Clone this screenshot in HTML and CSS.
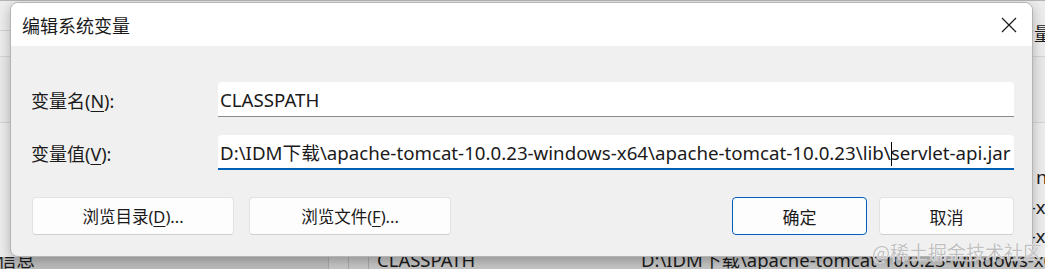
FILE: index.html
```html
<!DOCTYPE html>
<html lang="zh-CN">
<head>
<meta charset="utf-8">
<title>编辑系统变量</title>
<link rel="stylesheet" href="styles.css">
</head>
<body>
<div class="screen">
  <div class="backdrop">
    <div class="bd-head"><span class="bd-head-text">量</span></div>
    <div class="bd-band"></div>
    <div class="bd-list">
      <div class="bd-row"><span class="bd-name"></span><span class="bd-value bd-value-nc">nc</span></div>
      <div class="bd-row"><span class="bd-name"></span><span class="bd-value">D:\IDM下载\apache-tomcat-10.0.23-windows-x64\apache</span></div>
      <div class="bd-row"><span class="bd-name"></span><span class="bd-value">D:\IDM下载\apache-tomcat-10.0.23-windows-x64\apache</span></div>
      <div class="bd-gap"></div>
      <div class="bd-row bd-row-sel">
        <span class="bd-lead">信息</span>
        <span class="bd-sep"></span>
        <span class="bd-sep"></span>
        <span class="bd-name bd-name-sel">CLASSPATH</span>
        <span class="bd-value">D:\IDM下载\apache-tomcat-10.0.23-windows-x64\apache</span>
      </div>
    </div>
  </div>

  <div class="dialog">
    <div class="titlebar">
      <span class="title">编辑系统变量</span>
      <span class="close" aria-label="关闭">
        <svg width="16" height="16" viewBox="0 0 16 16"><path d="M1 1 L15 15 M15 1 L1 15" stroke="#1a1a1a" stroke-width="1.2" fill="none"/></svg>
      </span>
    </div>
    <div class="content">
      <div class="field">
        <label class="label">变量名(<u>N</u>):</label>
        <div class="input"><span class="input-text">CLASSPATH</span></div>
      </div>
      <div class="field">
        <label class="label">变量值(<u>V</u>):</label>
        <div class="input input-focus"><span class="input-text">D:\IDM下载\apache-tomcat-10.0.23-windows-x64\apache-tomcat-10.0.23\lib\<span class="caret"></span>servlet-api.jar</span></div>
      </div>
      <div class="buttons">
        <div class="btn btn-wide">浏览目录(<u>D</u>)...</div>
        <div class="btn btn-wide">浏览文件(<u>F</u>)...</div>
        <div class="spacer"></div>
        <div class="btn btn-small btn-default">确定</div>
        <div class="btn btn-small">取消</div>
      </div>
    </div>
  </div>
  <div class="watermark">@稀土掘金技术社区</div>
</div>
</body>
</html>
```

FILE: styles.css
```css
* { box-sizing: border-box; }
html, body { margin: 0; padding: 0; }
body {
  width: 1045px;
  height: 269px;
  overflow: hidden;
  font-family: "Noto Sans", "Noto Sans CJK SC", sans-serif;
  font-size: 17px;
  color: #1a1a1a;
  background: #eeeeee;
}
.screen {
  position: relative;
  width: 1045px;
  height: 269px;
  overflow: hidden;
}

/* underlying window */
.backdrop {
  display: flex;
  flex-direction: column;
  width: 1045px;
  height: 269px;
  background: #ececec;
}
.bd-head {
  height: 57px;
  flex: none;
  border-top: 1px solid #b4b4b4;
  border-bottom: 1px solid #d4d4d4;
  display: flex;
  justify-content: flex-end;
  align-items: flex-start;
  padding-top: 19px;
  background: linear-gradient(to bottom, #ececec 0, #ececec 29px, #d4d4d4 29px, #d4d4d4 30px, #ececec 30px);
}
.bd-head-text { font-size: 18px; width: 11px; overflow: hidden; white-space: nowrap; background: #ececec; }
.bd-band {
  height: 66px;
  flex: none;
  border-bottom: 1px solid #d4d4d4;
  background: #e8e8e8;
}
.bd-list {
  display: flex;
  flex-direction: column;
  padding-top: 39px;
}
.bd-row {
  display: flex;
  height: 29px;
  flex: none;
  align-items: center;
  white-space: nowrap;
  font-size: 18.5px;
}
.bd-gap { height: 8px; flex: none; }
.bd-row-sel {
  height: 12px;
  align-items: flex-end;
  line-height: 18px;
  background: #c6c6c6;
  overflow: hidden;
}
.bd-lead {
  width: 330px;
  flex: none;
  margin-left: -2px;
  background: #bdbdbd;
  height: 12px;
  display: flex;
  align-items: flex-end;
  line-height: 18px;
}
.bd-sep {
  width: 20px;
  flex: none;
  height: 12px;
  border-left: 1px solid #a9a9a9;
}
.bd-name { width: 643px; padding-left: 378px; flex: none; }
.bd-name-sel {
  width: 273px;
  padding-left: 8px;
  border-left: 1px solid #a9a9a9;
}
.bd-value { flex: none; }
.bd-value-nc { padding-left: 393px; }

/* dialog */
.dialog {
  position: absolute;
  left: 10px;
  top: 2px;
  width: 1023px;
  height: 255px;
  border-radius: 8px;
  overflow: hidden;
  background: #f0f0f0;
  border: 1px solid #b4b4b4;
  box-shadow: 0 4px 12px rgba(0,0,0,0.25);
  display: flex;
  flex-direction: column;
}
.titlebar {
  height: 43px;
  flex: none;
  background: #ffffff;
  display: flex;
  align-items: center;
  justify-content: space-between;
  padding: 0 15px 0 11px;
}
.title { font-size: 18px; color: #1a1a1a; }
.close { display: flex; width: 16px; height: 16px; }
.content {
  flex: 1;
  display: flex;
  flex-direction: column;
  padding: 36px 18px 0 19px;
}
.field {
  display: flex;
  align-items: center;
  height: 35px;
  margin-bottom: 18px;
}
.label { width: 188px; flex: none; padding-left: 1px; font-size: 18px; }
.label u { text-underline-offset: 3px; }
.input {
  flex: 1;
  height: 35px;
  background: #ffffff;
  border-radius: 4px 4px 0 0;
  border-bottom: 1px solid #8a8a8a;
  display: flex;
  align-items: center;
  padding-left: 2px;
  white-space: nowrap;
  overflow: hidden;
  font-size: 18.7px;
}
.input-focus { border-bottom: 2px solid #005fb8; padding-top: 1px; }
.caret {
  display: inline-block;
  width: 1px;
  height: 24px;
  background: #000;
  vertical-align: -6px;
  margin-right: -1px;
}
.buttons {
  display: flex;
  align-items: center;
  margin-top: 9px;
  padding-left: 2px;
  gap: 15px;
}
.spacer { flex: 1; }
.btn {
  height: 38px;
  background: #fdfdfd;
  border: 1px solid #e2e2e2;
  border-bottom-color: #cfcfcf;
  border-radius: 4px;
  display: flex;
  align-items: center;
  justify-content: center;
  font-size: 17px;
  color: #1a1a1a;
}
.btn-wide { font-size: 16.5px; }
.btn u { text-underline-offset: 3px; }
.btn-wide { width: 202px; }
.btn-small { width: 135px; }
.btn-default { border: 1px solid #005fb8; margin-right: -3px; }

.watermark {
  position: absolute;
  left: 872px;
  top: 238px;
  font-size: 19px;
  color: rgba(185,185,185,0.9);
  text-shadow: 0 0 1px #fff, 0 0 1px #fff;
  white-space: nowrap;
  font-family: "Noto Sans CJK SC", sans-serif;
}
```
